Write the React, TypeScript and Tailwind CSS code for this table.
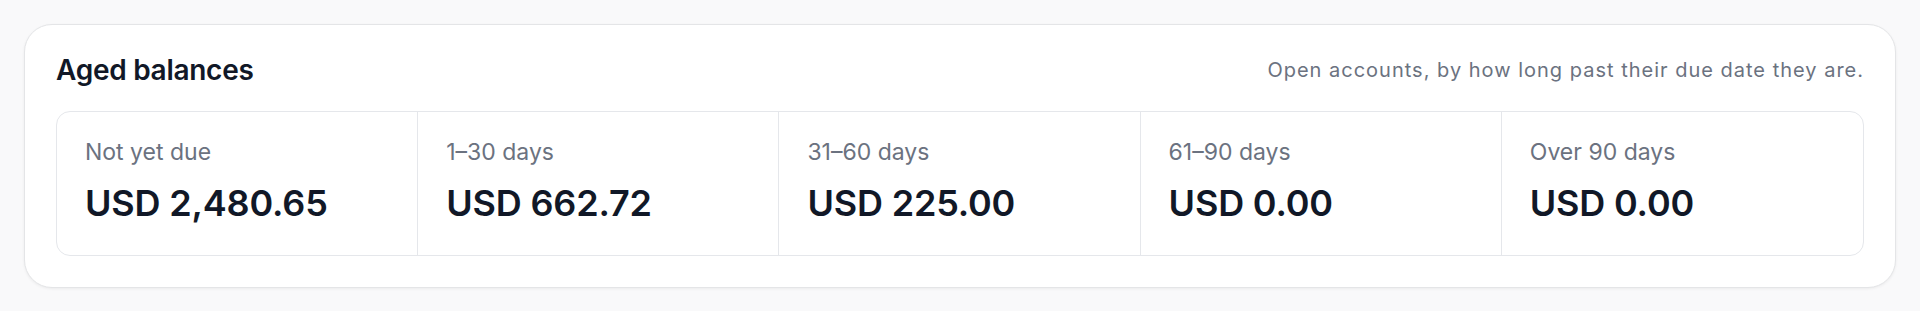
import React from 'react';

const buckets = [
  { label: 'Not yet due', amount: 'USD 2,480.65' },
  { label: '1–30 days', amount: 'USD 662.72' },
  { label: '31–60 days', amount: 'USD 225.00' },
  { label: '61–90 days', amount: 'USD 0.00' },
  { label: 'Over 90 days', amount: 'USD 0.00' },
];

const App = () => {
  return (
    <div className="min-h-screen bg-[#f9f9fa] p-6 font-['Inter','Noto_Sans',sans-serif]">
      <div className="rounded-[28px] border border-[#e4e5e7] bg-white px-[31px] pt-[27px] pb-[31px] shadow-[0_1px_3px_rgba(0,0,0,0.06)]">
        <div className="flex items-center justify-between">
          <h2 className="text-[28px] leading-9 font-semibold tracking-[-0.01em] text-[#111827]">Aged balances</h2>
          <p className="text-[20px] leading-7 tracking-[0.05em] text-[#6b7280]">
            Open accounts, by how long past their due date they are.
          </p>
        </div>

        <div className="mt-[23px] grid grid-cols-5 divide-x divide-[#e5e7eb] rounded-[14px] border border-[#e5e7eb]">
          {buckets.map((b) => (
            <div key={b.label} className="px-7 pt-6 pb-[32px]">
              <div className="text-[23px] leading-8 text-[#6b7280]">{b.label}</div>
              <div className="mt-[15px] text-[36px] leading-10 font-semibold tracking-[-0.005em] text-[#111827]">
                {b.amount}
              </div>
            </div>
          ))}
        </div>
      </div>
    </div>
  );
};

export default App;
